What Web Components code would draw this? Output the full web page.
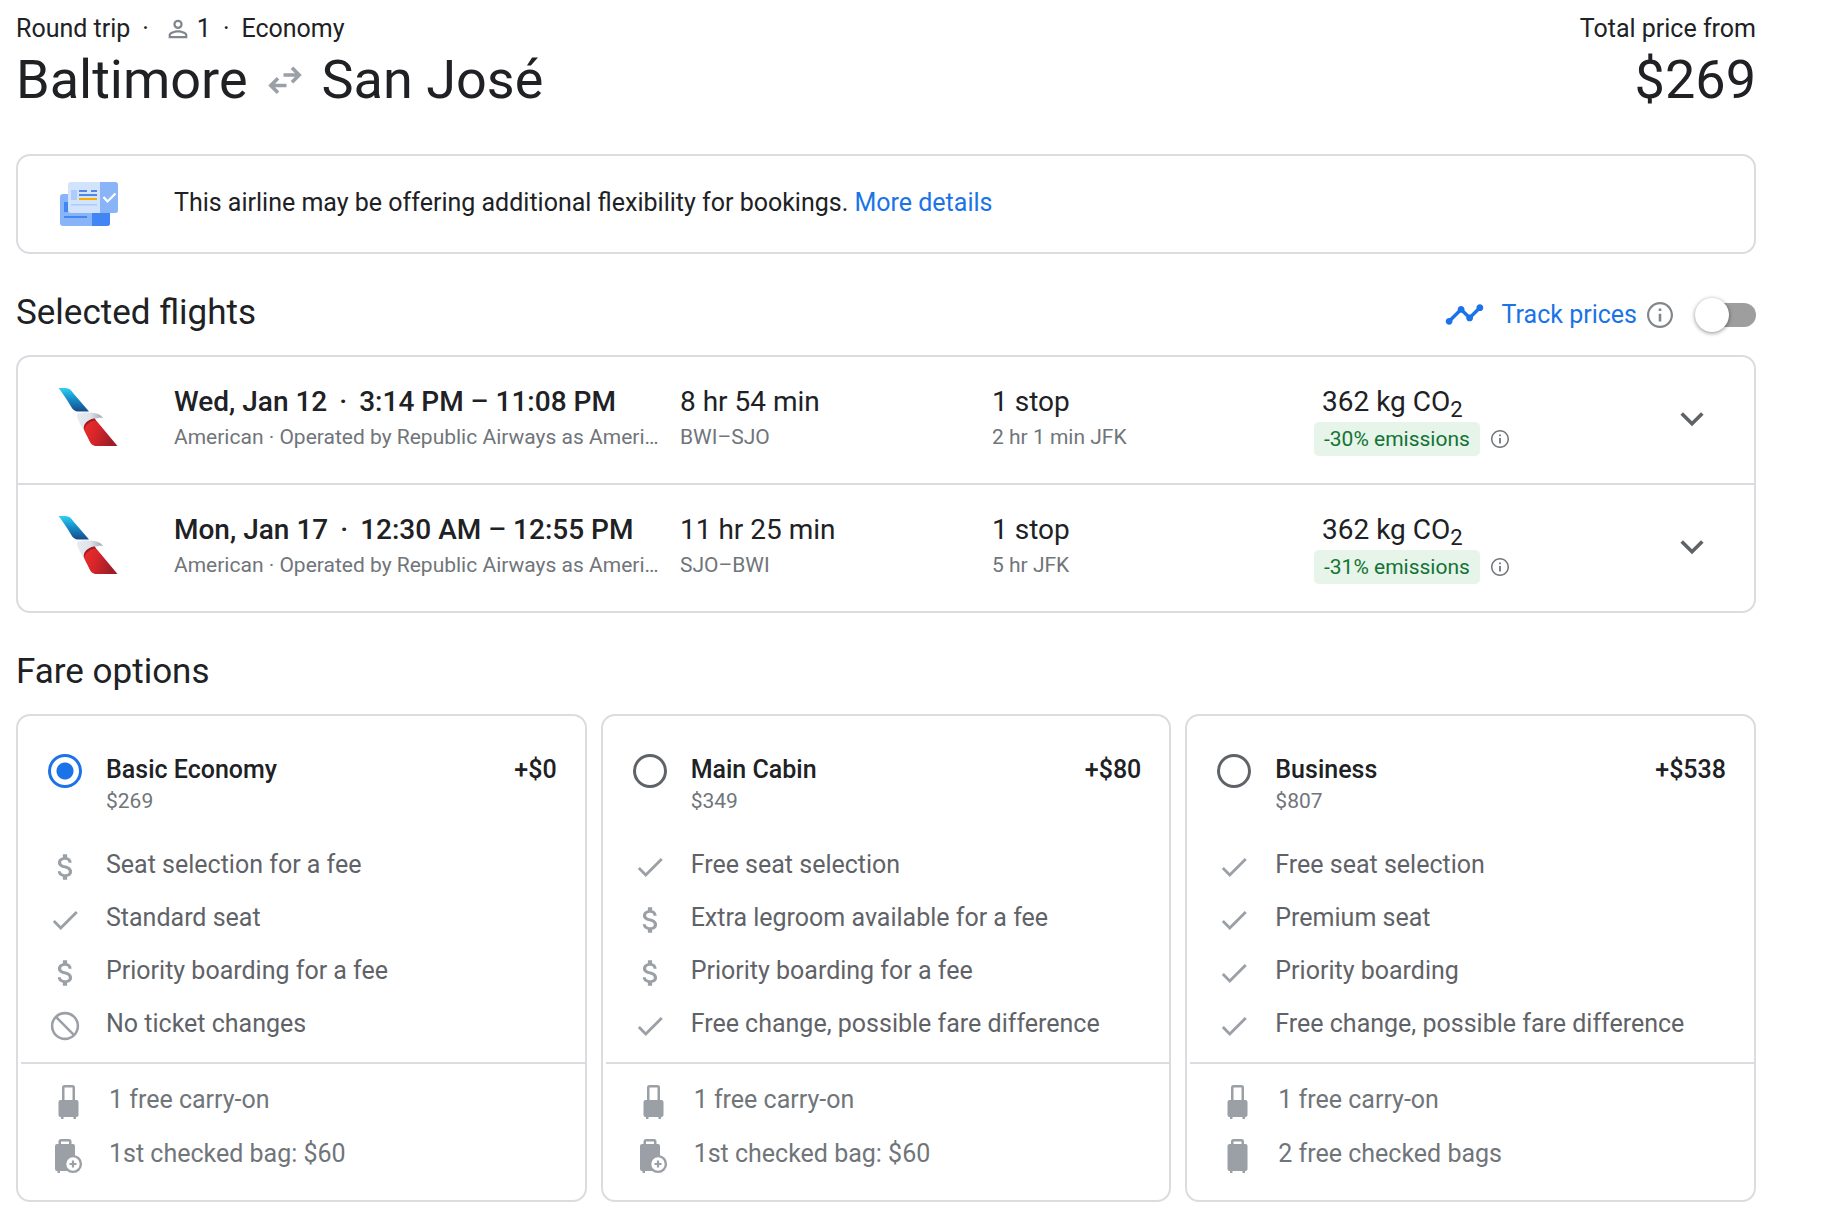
<!DOCTYPE html>
<html lang="en">
<head>
<meta charset="utf-8">
<meta name="viewport" content="width=device-width, initial-scale=1">
<title>Baltimore to San José</title>
<style>
  :root {
    --ink: #202124; --text: #5f6368; --muted: #70757a; --icon: #9aa0a6;
    --line: #dadce0; --blue: #1a73e8;
  }
  body { margin: 0; background: #fff; color: var(--ink); font: 400 25px/32px Roboto, "Liberation Sans", sans-serif; }
</style>
</head>
<body>
<booking-page></booking-page>

<script>
const ICONS = {
  person: ['0 0 24 24', '<path d="M12 4a4 4 0 1 0 0 8 4 4 0 0 0 0-8zm0 1.900a2.100 2.100 0 1 1 0 4.200 2.100 2.100 0 0 1 0-4.200zM12 13c-2.670 0-8 1.340-8 4v3h16v-3c0-2.660-5.330-4-8-4zm6.100 5.100H5.900V17c0-.640 3.130-2.100 6.100-2.100s6.100 1.460 6.100 2.100z"/>'],
  swap: ['0 0 34 28', '<g fill="none" stroke="currentColor" stroke-width="3.600"><path d="M15.500 9H31M24 1.800 31.200 9 24 16.200M18.500 19.500H3M10 12.300 2.800 19.500 10 26.700"/></g>'],
  trend: ['0 0 24 24', '<path d="M23 8c0 1.100-.9 2-2 2-.18 0-.35-.02-.51-.07l-3.560 3.550c.05.16.07.34.07.52 0 1.100-.9 2-2 2s-2-.9-2-2c0-.18.02-.36.07-.52l-2.550-2.550c-.16.05-.34.07-.52.07s-.36-.02-.52-.07l-4.550 4.560c.05.16.07.33.07.51 0 1.100-.9 2-2 2s-2-.9-2-2 .9-2 2-2c.18 0 .35.02.51.07l4.560-4.550C8.020 9.360 8 9.180 8 9c0-1.100.9-2 2-2s2 .9 2 2c0 .18-.02.36-.07.52l2.550 2.550c.16-.05.34-.07.52-.07s.36.02.52.07l3.550-3.560C19.020 8.350 19 8.180 19 8c0-1.100.9-2 2-2s2 .9 2 2z"/>'],
  info: ['2 2 20 20', '<path d="M11 7h2v2h-2zm0 4h2v6h-2zm1-9C6.480 2 2 6.480 2 12s4.480 10 10 10 10-4.480 10-10S17.520 2 12 2zm0 18.300c-4.580 0-8.300-3.720-8.300-8.300S7.420 3.700 12 3.700s8.300 3.720 8.300 8.300-3.720 8.300-8.300 8.300z"/>'],
  chevron: ['0 0 24 16', '<path d="M1.700 2.500 12 12.800 22.300 2.500" fill="none" stroke="currentColor" stroke-width="3.600"/>'],
  fee: ['0 0 24 24', '<path d="M11.800 10.900c-2.270-.59-3-1.200-3-2.150 0-1.090 1.010-1.850 2.700-1.850 1.780 0 2.440.85 2.500 2.100h2.210c-.07-1.720-1.120-3.300-3.210-3.810V3h-3v2.160c-1.940.42-3.500 1.680-3.500 3.610 0 2.310 1.910 3.460 4.700 4.130 2.500.6 3 1.480 3 2.410 0 .69-.49 1.790-2.700 1.790-2.060 0-2.870-.92-2.980-2.100h-2.200c.12 2.190 1.760 3.420 3.680 3.830V21h3v-2.150c1.950-.37 3.500-1.500 3.500-3.550 0-2.840-2.430-3.810-4.700-4.400z" transform="translate(.5 0)"/>'],
  check: ['0 0 24 24', '<path d="M9 16.170 4.830 12l-1.420 1.410L9 19 21 7l-1.410-1.410z"/>'],
  block: ['0 0 24 24', '<g fill="none" stroke="currentColor" stroke-width="1.800"><circle cx="12" cy="12" r="9.100"/><path d="m5.600 5.600 12.800 12.800"/></g>'],
  carryon: ['-3 0 34 36', '<path d="M8 16V3.500a2.500 2.500 0 0 1 2.500-2.500h8A2.500 2.500 0 0 1 21 3.500V16h1.500a2 2 0 0 1 2 2v13a2 2 0 0 1-2 2H22v2h-2.500v-2h-10v2H7v-2h-.500a2 2 0 0 1-2-2V18a2 2 0 0 1 2-2zm2.500 0h8V3.500h-8z"/>'],
  bag: ['-3 0 34 36', '<path d="M8 6V3.500a2.500 2.500 0 0 1 2.500-2.500h8A2.500 2.500 0 0 1 21 3.500V6h1.500a2 2 0 0 1 2 2v23a2 2 0 0 1-2 2H22v2h-2.500v-2h-10v2H7v-2h-.500a2 2 0 0 1-2-2V8a2 2 0 0 1 2-2zm2.500 0h8V3.500h-8z"/>'],
  bagfee: ['-3 0 34 36', '<path d="M4.500 6V3.500A2.500 2.500 0 0 1 7 1h8a2.500 2.500 0 0 1 2.500 2.500V6H19a2 2 0 0 1 2 2v23a2 2 0 0 1-2 2H6v2H3.500v-2H3a2 2 0 0 1-2-2V8a2 2 0 0 1 2-2zM7 6h8V3.500H7z"/><circle cx="19" cy="26" r="7.900" fill="#fff" stroke="currentColor" stroke-width="2.400"/><path d="M17.900 22.500h2.200v2.400h2.400v2.200h-2.400v2.400h-2.200v-2.400h-2.400v-2.200h2.400z"/>'],
  tickets: ['0 0 58 44', `<rect y="12" width="50" height="32" rx="3" fill="#8ab4f8"/><path d="M32 12h15a3 3 0 0 1 3 3v26a3 3 0 0 1-3 3H32z" fill="#4285f4"/>
    <path d="M4 20h4v10H4zM4 34h23v2H4z" fill="#4285f4"/><rect x="8" y="0" width="50" height="31" rx="3" fill="#d2e3fc"/><path d="M40 0h15a3 3 0 0 1 3 3v25a3 3 0 0 1-3 3H40z" fill="#8ab4f8"/>
    <path d="M11 8h6v10h-6zM11 22h26v1.500H11z" fill="#aecbfa"/><path d="M19 8h8v2h-8zM31 8h6v2h-6zM19 12h18v2H19z" fill="#4f86ec"/><path d="M19 16h18v2H19z" fill="#f9ab00"/>
    <path d="m43.500 15 4 4.500 8-8" fill="none" stroke="#fff" stroke-width="2.200"/>`],
  american: ['0 0 60 58', `<defs><linearGradient id="b" x1="0" y1="0" x2="0" y2="1"><stop stop-color="#2fd0f5"/><stop offset=".45" stop-color="#1690cc"/><stop offset="1" stop-color="#154a8a"/></linearGradient>
    <linearGradient id="r" x1="0" y1="0" x2="1" y2=".3"><stop stop-color="#ec2f26"/><stop offset=".45" stop-color="#d8262b"/><stop offset="1" stop-color="#9e1d26"/></linearGradient>
    <linearGradient id="s" x1="0" y1="0" x2="1" y2="0"><stop stop-color="#e6eaf2"/><stop offset=".5" stop-color="#dfe4ea"/><stop offset="1" stop-color="#9aaab2"/></linearGradient></defs>
    <path d="M.6 0h7c3.500.2 5.500 1.800 7.500 5L31 23.500H20c-3 0-5-1.700-6.700-4.500C9.500 12 5 6 .6 0z" fill="url(#b)"/>
    <path d="M19 26.500c2-2 6-2.300 11-2 7 0 13 1.700 15 5.500-3-.5-6 .5-9 .8-6 1.700-9.500 5.200-10 11.700C22.500 37 19 31 19 26.500z" fill="url(#s)"/>
    <path d="M36.500 30.500 59.500 58H39c-4 0-6-1.500-7.500-5L26 42c-1-5 3-10 10.500-11.500z" fill="url(#r)"/>
    <path d="M26 41.500c-1-5 3-9.800 10.500-11l1.500 2c-6 .5-9.500 3.500-12 9z" fill="#9f1c23"/>`]
};

/* Registers an element whose open shadow root is filled by render(). */
function define(tag, css, render, ready) {
  customElements.define(tag, class extends HTMLElement {
    connectedCallback() {
      if (this.shadowRoot) return;
      const root = this.attachShadow({ mode: 'open' });
      root.innerHTML = `<style>*{box-sizing:border-box}${css}</style>${render(this)}`;
      if (ready) ready(this, root);
    }
  });
}

define('ui-icon', `
  :host { display: inline-block; flex: none; line-height: 0; }
  svg { display: block; width: 100%; height: 100%; fill: currentColor; }
`, el => {
  const [box, body] = ICONS[el.getAttribute('name')];
  return `<svg viewBox="${box}" aria-hidden="true">${body}</svg>`;
});

define('trip-header', `
  :host { display: flex; justify-content: space-between; padding-top: 13px; }
  .meta, h1 { display: flex; align-items: center; }
  .meta { gap: 12px; }
  .pax { display: flex; align-items: center; gap: 5px; margin-left: 3px; }
  .pax ui-icon { width: 28px; height: 28px; color: #80868b; }
  h1, .price { margin: 3px 0 0; font-size: 54px; line-height: 64px; font-weight: 400; }
  h1 { gap: 20px; }
  h1 ui-icon { width: 34px; height: 28px; color: var(--icon); }
  .total { text-align: right; }
`, () => `
  <div>
    <div class="meta"><span>Round trip</span><span>·</span><span class="pax"><ui-icon name="person"></ui-icon>1</span><span>·</span><span>Economy</span></div>
    <h1><span>Baltimore</span><ui-icon name="swap"></ui-icon><span>San José</span></h1>
  </div>
  <div class="total"><div>Total price from</div><div class="price">$269</div></div>
`);

define('info-banner', `
  :host { display: flex; align-items: center; gap: 56px; min-height: 100px; box-sizing: border-box; margin-top: 42px; padding: 0 42px; border: 2px solid var(--line); border-radius: 14px; }
  ui-icon { width: 58px; height: 44px; }
  p { margin: 0 0 2px; }
`, () => `<ui-icon name="tickets"></ui-icon><p><slot></slot></p>`);

define('section-heading', `
  :host { display: flex; align-items: center; justify-content: space-between; margin: 39px 0 22px; }
  h2 { margin: 0; font-size: 35px; line-height: 40px; font-weight: 400; }
`, () => `<h2><slot></slot></h2><slot name="action"></slot>`);

define('track-toggle', `
  :host { display: flex; align-items: center; box-sizing: border-box; height: 40px; padding-top: 3px; }
  label { display: flex; align-items: center; gap: 17px; color: var(--blue); }
  label ui-icon { width: 41px; height: 41px; }
  button { display: flex; margin: 0 0 0 10px; padding: 0; border: 0; background: none; color: #80868b; }
  button ui-icon { width: 26px; height: 26px; }
  input { appearance: none; display: flex; align-items: center; width: 56px; height: 24px; margin: 0 0 0 27px; border-radius: 12px; background: #9e9e9e; }
  input::before { content: ""; width: 34px; height: 34px; margin-left: -5px; border-radius: 50%; background: #fff; box-shadow: 0 1px 4px rgba(0,0,0,.45); }
  input:checked { justify-content: flex-end; background: #8ab4f8; }
`, () => `
  <label for="track"><ui-icon name="trend"></ui-icon>Track prices</label>
  <button type="button" aria-label="About price tracking"><ui-icon name="info"></ui-icon></button>
  <input id="track" type="checkbox" role="switch">
`);

define('flight-list', `
  :host { display: block; border: 2px solid var(--line); border-radius: 14px; }
  ::slotted(flight-row:not(:first-child)) { border-top: 2px solid var(--line); }
`, () => `<slot></slot>`);

define('flight-row', `
  :host { display: grid; grid-template-columns: 116px minmax(0,506fr) minmax(0,312fr) minmax(0,322fr) minmax(0,366fr) 24px; padding: 27px 50px 27px 40px; }
  .logo { width: 60px; height: 58px; margin-top: 4px; }
  .main { font-size: 28px; line-height: 36px; white-space: nowrap; }
  .when { font-weight: 500; }
  .when i { font-style: normal; margin: 0 12px; }
  .sub { font-size: 21px; line-height: 34px; color: var(--muted); white-space: nowrap; overflow: hidden; text-overflow: ellipsis; }
  .co { padding-left: 8px; }
  sub { font-size: 22px; line-height: 0; vertical-align: -6px; }
  .em { display: flex; align-items: center; gap: 11px; margin-top: 2px; }
  .pill { padding: 0 10px; border-radius: 5px; background: #e6f4ea; color: #137333; font-size: 21px; line-height: 34px; white-space: nowrap; }
  button { display: flex; margin: 0; padding: 0; border: 0; background: none; color: var(--muted); }
  .em ui-icon { width: 18px; height: 18px; }
  .open { align-self: center; grid-column: 6; padding-bottom: 2px; color: var(--text); }
  .open ui-icon { width: 24px; height: 16px; }
`, el => {
  const a = n => el.getAttribute(n);
  return `
  <ui-icon class="logo" name="american"></ui-icon>
  <div><div class="main when">${a('date')}<i>·</i>${a('times')}</div><div class="sub"><slot></slot></div></div>
  <div><div class="main">${a('duration')}</div><div class="sub">${a('route')}</div></div>
  <div><div class="main">${a('stops')}</div><div class="sub">${a('layover')}</div></div>
  <div><div class="main co">${a('co2')} CO<sub>2</sub></div>
    <div class="em"><span class="pill">${a('emissions')} emissions</span><button type="button" aria-label="About emissions"><ui-icon name="info"></ui-icon></button></div></div>
  <button class="open" type="button" aria-label="Flight details"><ui-icon name="chevron"></ui-icon></button>`;
});

define('fare-grid', `
  :host { display: grid; grid-template-columns: repeat(3, minmax(0, 1fr)); gap: 14px; }
`, () => `<slot></slot>`, el => {
  el.addEventListener('fare-picked', e => {
    for (const card of el.children) if (card !== e.target) card.shadowRoot.querySelector('input').checked = false;
  });
});

define('fare-card', `
  :host { display: block; border: 2px solid var(--line); border-radius: 14px; }
  .head { display: flex; gap: 24px; padding: 38px 28px 0 30px; }
  input { appearance: none; flex: none; width: 34px; height: 34px; margin: 0; border: 3px solid var(--text); border-radius: 50%; }
  input:checked { border-color: var(--blue); background: radial-gradient(circle, var(--blue) 8px, transparent 9px); }
  label { flex: 1; font-weight: 500; }
  label small { display: block; font-weight: 400; font-size: 21px; line-height: 30px; color: var(--muted); }
  .diff { font-weight: 500; }
  .perks { padding: 22px 28px 12px 30px; color: var(--text); }
  .bags { margin-left: 3px; padding: 9px 28px 19px 30px; border-top: 2px solid var(--line); color: var(--muted); }
`, el => `
  <div class="head"><input id="pick" type="radio" name="fare" ${el.hasAttribute('checked') ? 'checked' : ''}>
    <label for="pick">${el.getAttribute('name')}<small>${el.getAttribute('price')}</small></label>
    <span class="diff">${el.getAttribute('diff')}</span></div>
  <div class="perks"><slot></slot></div>
  <div class="bags"><slot name="bags"></slot></div>
`, (el, root) => root.querySelector('input').addEventListener('change', () =>
  el.dispatchEvent(new CustomEvent('fare-picked', { bubbles: true }))));

define('fare-item', `
  :host { display: flex; align-items: center; gap: 24px; min-height: 53px; }
  :host([slot]) { min-height: 54px; }
  ui-icon { width: 34px; height: 34px; margin-top: 4px; color: var(--icon); }
  :host([slot]) ui-icon { height: 36px; margin-top: 3px; }
`, el => `<ui-icon name="${el.getAttribute('icon')}"></ui-icon><span><slot></slot></span>`);

define('booking-page', `
  :host { display: block; padding: 0 72px 24px 16px; }
  a { color: var(--blue); text-decoration: none; }
`, () => `
  <trip-header></trip-header>
  <info-banner>This airline may be offering additional flexibility for bookings. <a href="#details">More details</a></info-banner>
  <section-heading>Selected flights<track-toggle slot="action"></track-toggle></section-heading>
  <flight-list>
    <flight-row date="Wed, Jan 12" times="3:14 PM – 11:08 PM" duration="8 hr 54 min" route="BWI–SJO" stops="1 stop" layover="2 hr 1 min JFK" co2="362 kg" emissions="-30%">American · Operated by Republic Airways as Ameri…</flight-row>
    <flight-row date="Mon, Jan 17" times="12:30 AM – 12:55 PM" duration="11 hr 25 min" route="SJO–BWI" stops="1 stop" layover="5 hr JFK" co2="362 kg" emissions="-31%">American · Operated by Republic Airways as Ameri…</flight-row>
  </flight-list>
  <section-heading>Fare options</section-heading>
  <fare-grid>
    <fare-card name="Basic Economy" price="$269" diff="+$0" checked>
      <fare-item icon="fee">Seat selection for a fee</fare-item>
      <fare-item icon="check">Standard seat</fare-item>
      <fare-item icon="fee">Priority boarding for a fee</fare-item>
      <fare-item icon="block">No ticket changes</fare-item>
      <fare-item slot="bags" icon="carryon">1 free carry-on</fare-item>
      <fare-item slot="bags" icon="bagfee">1st checked bag: $60</fare-item>
    </fare-card>
    <fare-card name="Main Cabin" price="$349" diff="+$80">
      <fare-item icon="check">Free seat selection</fare-item>
      <fare-item icon="fee">Extra legroom available for a fee</fare-item>
      <fare-item icon="fee">Priority boarding for a fee</fare-item>
      <fare-item icon="check">Free change, possible fare difference</fare-item>
      <fare-item slot="bags" icon="carryon">1 free carry-on</fare-item>
      <fare-item slot="bags" icon="bagfee">1st checked bag: $60</fare-item>
    </fare-card>
    <fare-card name="Business" price="$807" diff="+$538">
      <fare-item icon="check">Free seat selection</fare-item>
      <fare-item icon="check">Premium seat</fare-item>
      <fare-item icon="check">Priority boarding</fare-item>
      <fare-item icon="check">Free change, possible fare difference</fare-item>
      <fare-item slot="bags" icon="carryon">1 free carry-on</fare-item>
      <fare-item slot="bags" icon="bag">2 free checked bags</fare-item>
    </fare-card>
  </fare-grid>
`);
</script>
</body>
</html>
